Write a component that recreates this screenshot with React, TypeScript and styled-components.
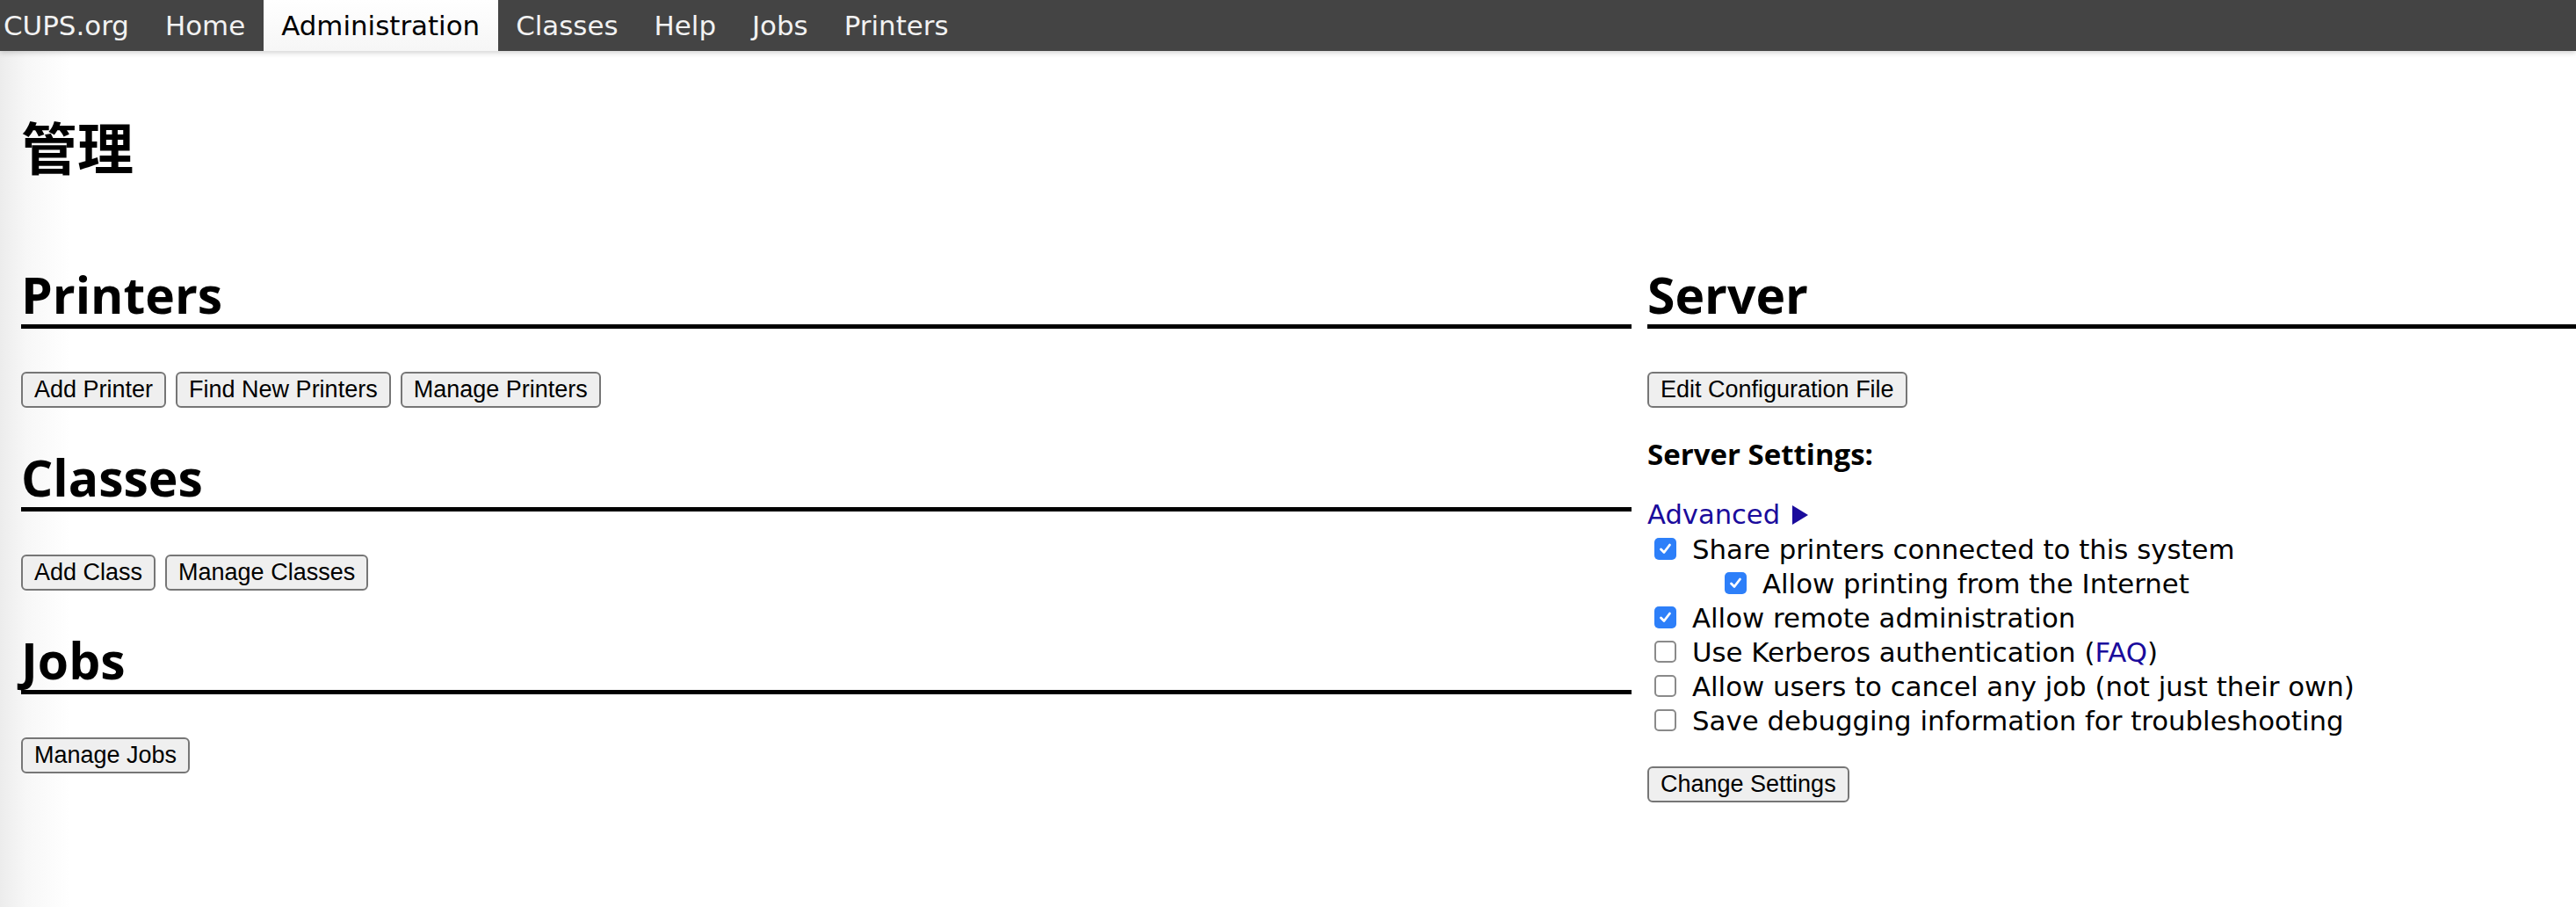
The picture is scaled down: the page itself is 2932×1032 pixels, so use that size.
import React from "react";
import styled, { createGlobalStyle } from "styled-components";

const GlobalStyle = createGlobalStyle`
  html, body {
    margin: 0;
    padding: 0;
  }
  body {
    width: 2932px;
    min-height: 1032px;
    overflow: hidden;
    background: linear-gradient(to right, #ececec 0px, #f7f7f7 30px, #ffffff 80px);
    font-family: "DejaVu Sans", "Noto Sans CJK SC", sans-serif;
    color: #000;
  }
`;

const Header = styled.nav`
  height: 58px;
  background: #444444;
  box-shadow: 0 2px 6px rgba(0, 0, 0, 0.18);
  position: relative;
  z-index: 1;
`;

const NavList = styled.ul`
  display: flex;
  margin: 0;
  padding: 0;
  list-style: none;
  height: 58px;
`;

const NavItem = styled.li<{ $active?: boolean; $first?: boolean }>`
  display: flex;
  align-items: center;
  height: 58px;
  padding: 0 20.5px 0 ${(p) => (p.$first ? "4px" : "20.5px")};
  font-size: 30.9px;
  line-height: 58px;
  color: ${(p) => (p.$active ? "#000" : "#f2f2f2")};
  background: ${(p) =>
    p.$active ? "linear-gradient(to bottom, #ffffff 0%, #f6f6f6 100%)" : "transparent"};
`;

const Page = styled.main`
  padding: 0 0 0 24px;
`;

const Title = styled.h1`
  margin: 75px 0 0 0;
  font-family: "Noto Sans CJK SC", "Noto Sans CJK JP", sans-serif;
  font-weight: 700;
  font-size: 64px;
  line-height: 64px;
  height: 64px;
`;

const Columns = styled.div`
  display: grid;
  grid-template-columns: 1833px 1fr;
  column-gap: 18px;
  margin-top: 104px;
`;

const Column = styled.section`
  display: flex;
  flex-direction: column;
`;

const SectionTitle = styled.h2<{ $first?: boolean }>`
  margin: ${(p) => (p.$first ? "0" : "45px")} 0 0 0;
  font-family: "Open Sans", "DejaVu Sans", sans-serif;
  font-weight: 700;
  font-size: 57px;
  line-height: 68px;
  height: 68px;
  border-bottom: 5px solid #000;
`;

const ButtonRow = styled.div`
  display: flex;
  gap: 11px;
  margin-top: 49px;
`;

const Button = styled.button`
  font-family: "Liberation Sans", Arial, sans-serif;
  font-size: 27px;
  line-height: 31px;
  color: #000;
  background: #efefef;
  border: 2px solid #767676;
  border-radius: 6px;
  padding: 2px 13px;
  height: 41px;
  cursor: pointer;
`;

const SettingsHeading = styled.p`
  margin: 33px 0 0 0;
  font-family: "Open Sans", "DejaVu Sans", sans-serif;
  font-weight: 700;
  font-size: 33px;
  line-height: 39px;
`;

const Link = styled.a`
  color: #1a0b9c;
  text-decoration: none;
`;

const Advanced = styled.div`
  margin-top: 30px;
  display: flex;
  align-items: center;
  gap: 13px;
  font-size: 30.6px;
  line-height: 39px;
  color: #1a0b9c;
`;

const OptionList = styled.div`
  display: flex;
  flex-direction: column;
`;

const OptionRow = styled.label<{ $indent?: boolean }>`
  display: flex;
  align-items: center;
  height: 39px;
  font-size: 30.8px;
  padding-left: ${(p) => (p.$indent ? "88px" : "8px")};
`;

const Box = styled.span<{ $checked?: boolean }>`
  display: inline-flex;
  align-items: center;
  justify-content: center;
  box-sizing: border-box;
  width: 25px;
  height: 25px;
  margin-right: 18px;
  border-radius: 5px;
  background: ${(p) => (p.$checked ? "#2d7ff9" : "#ffffff")};
  border: ${(p) => (p.$checked ? "none" : "2px solid #8a8a8a")};
`;

const ChangeRow = styled.div`
  margin-top: 33px;
  display: flex;
`;

function CheckBox({ checked }: { checked?: boolean }) {
  return (
    <Box $checked={checked}>
      {checked && (
        <svg width="17" height="17" viewBox="0 0 17 17">
          <path
            d="M3.5 9 L7 12.5 L13.5 4"
            fill="none"
            stroke="#fff"
            strokeWidth="2.8"
            strokeLinecap="round"
            strokeLinejoin="round"
          />
        </svg>
      )}
    </Box>
  );
}

const navItems = ["CUPS.org", "Home", "Administration", "Classes", "Help", "Jobs", "Printers"];

export default function App() {
  return (
    <>
      <GlobalStyle />
      <Header>
        <NavList>
          {navItems.map((n, i) => (
            <NavItem key={n} $first={i === 0} $active={n === "Administration"}>
              {n}
            </NavItem>
          ))}
        </NavList>
      </Header>
      <Page>
        <Title>管理</Title>
        <Columns>
          <Column>
            <SectionTitle $first>Printers</SectionTitle>
            <ButtonRow>
              <Button>Add Printer</Button>
              <Button>Find New Printers</Button>
              <Button>Manage Printers</Button>
            </ButtonRow>
            <SectionTitle>Classes</SectionTitle>
            <ButtonRow>
              <Button>Add Class</Button>
              <Button>Manage Classes</Button>
            </ButtonRow>
            <SectionTitle>Jobs</SectionTitle>
            <ButtonRow>
              <Button>Manage Jobs</Button>
            </ButtonRow>
          </Column>
          <Column>
            <SectionTitle $first>Server</SectionTitle>
            <ButtonRow>
              <Button>Edit Configuration File</Button>
            </ButtonRow>
            <SettingsHeading>Server Settings:</SettingsHeading>
            <Advanced>
              <span>Advanced</span>
              <svg width="20" height="24" viewBox="0 0 20 24">
                <path d="M1 1 L19 12 L1 23 Z" fill="#1a0b9c" />
              </svg>
            </Advanced>
            <OptionList>
              <OptionRow>
                <CheckBox checked />
                Share printers connected to this system
              </OptionRow>
              <OptionRow $indent>
                <CheckBox checked />
                Allow printing from the Internet
              </OptionRow>
              <OptionRow>
                <CheckBox checked />
                Allow remote administration
              </OptionRow>
              <OptionRow>
                <CheckBox />
                Use Kerberos authentication (<Link>FAQ</Link>)
              </OptionRow>
              <OptionRow>
                <CheckBox />
                Allow users to cancel any job (not just their own)
              </OptionRow>
              <OptionRow>
                <CheckBox />
                Save debugging information for troubleshooting
              </OptionRow>
            </OptionList>
            <ChangeRow>
              <Button>Change Settings</Button>
            </ChangeRow>
          </Column>
        </Columns>
      </Page>
    </>
  );
}
